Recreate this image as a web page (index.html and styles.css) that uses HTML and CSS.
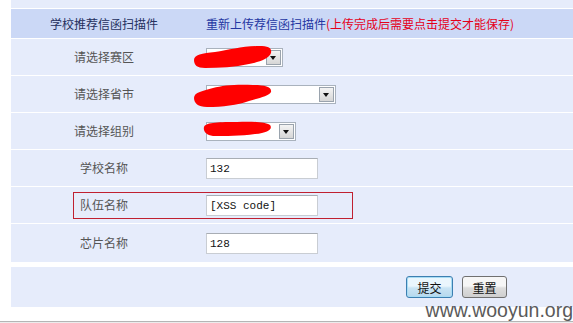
FILE: index.html
```html
<!DOCTYPE html>
<html lang="zh-CN">
  <head>
    <meta charset="UTF-8" />
    <title>学校推荐信函</title>
    <link rel="stylesheet" href="styles.css">
  </head>
  <body>
    <div class="page">
      <div class="form">
        <div class="stripe"></div>
        <div class="row head">
          <div class="label">学校推荐信函扫描件</div>
          <div class="value"><a class="upload" href="#">重新上传荐信函扫描件</a><span class="warn">(上传完成后需要点击提交才能保存)</span></div>
        </div>
        <div class="row">
          <div class="label">请选择赛区</div>
          <div class="value">
            <span class="select w1"><span class="arrow"></span></span>
            <svg class="blot b1" width="80" height="24" viewBox="0 0 80 24"><path d="M1 15 C1 10 9 8 22 7 C36 5 50 1 66 1 C76 1 79 3 78 8 C76 14 66 17 56 19 C42 22 26 23 12 23 C4 23 1 20 1 15 Z" fill="#f00"/></svg>
          </div>
        </div>
        <div class="row">
          <div class="label">请选择省市</div>
          <div class="value">
            <span class="select w2"><span class="arrow"></span></span>
            <svg class="blot b2" width="80" height="24" viewBox="0 0 80 24"><path d="M1 14 C1 8 10 7 20 4 C30 1 46 0 60 1 C72 1 79 3 78 8 C76 12 66 14 56 17 C44 21 30 23 14 23 C5 23 1 19 1 14 Z" fill="#f00"/></svg>
          </div>
        </div>
        <div class="row">
          <div class="label">请选择组别</div>
          <div class="value">
            <span class="select w3"><span class="arrow"></span></span>
            <svg class="blot b3" width="70" height="16" viewBox="0 0 70 16"><path d="M1 6 C3 1 18 1 34 1 C48 0 62 1 67 4 C70 8 65 12 52 13 C38 15 22 15 10 15 C3 14 0 10 1 6 Z" fill="#f00"/></svg>
          </div>
        </div>
        <div class="row">
          <div class="label">学校名称</div>
          <div class="value"><span class="input">132</span></div>
        </div>
        <div class="row">
          <div class="label">队伍名称</div>
          <div class="value"><span class="input">[XSS code]</span></div>
          <div class="mark"></div>
        </div>
        <div class="row last">
          <div class="label">芯片名称</div>
          <div class="value"><span class="input">128</span></div>
        </div>
        <div class="actions">
          <button class="btn primary">提交</button>
          <button class="btn">重置</button>
        </div>
      </div>
    </div>
    <div class="footer"></div>
    <div class="watermark">www.wooyun.org</div>
  </body>
</html>
```
FILE: styles.css
```css
* {
  margin: 0;
  padding: 0;
  box-sizing: border-box;
}
body {
  position: relative;
  background: #fff;
  font-family: "Noto Sans CJK SC", "Liberation Sans", sans-serif;
  font-size: 12px;
  color: #555;
  height: 323px;
  overflow: hidden;
}
.page {
  padding-left: 11px;
}
.form {
  display: flex;
  flex-direction: column;
  gap: 1px;
  background: #fff;
}
.stripe {
  height: 8px;
  background: #e6ecfb;
}
.row {
  position: relative;
  display: grid;
  grid-template-columns: 186px 1fr;
  align-items: center;
  height: 36px;
  background: #e6ecfb;
}
.row.head {
  height: 29px;
  background: #cbd8f6;
}
.row.last {
  height: 38px;
}
.label {
  text-align: center;
  line-height: 14px;
}
.head .label {
  color: #25305e;
}
.value {
  position: relative;
  padding-left: 9px;
  display: flex;
  align-items: center;
  line-height: 14px;
}
.upload {
  color: #2436a2;
  text-decoration: none;
}
.warn {
  color: #e4001a;
}
/* old style drop-down */
.select {
  position: relative;
  display: block;
  height: 19px;
  background: #fff;
  border: 1px solid #a9b2bd;
}
.select.w1 { width: 77px; }
.select.w2 { width: 130px; }
.select.w3 { width: 90px; }
.arrow {
  position: absolute;
  right: 1px;
  top: 1px;
  width: 15px;
  height: 15px;
  border: 1px solid #9aa3ad;
  background: linear-gradient(#f4f4f4, #d6d6d6);
}
.arrow::after {
  content: "";
  position: absolute;
  left: 3px;
  top: 5px;
  border-left: 3.5px solid transparent;
  border-right: 3.5px solid transparent;
  border-top: 4px solid #111;
}
.blot {
  position: absolute;
  display: block;
}
.b1 { left: -4px; top: -3px; }
.b2 { left: -4px; top: -1px; }
.b3 { left: 6px; top: -1px; }
.input {
  display: block;
  width: 112px;
  height: 21px;
  padding: 3px 3px 0;
  background: #fff;
  border: 1px solid #c9cdd3;
  border-top-color: #a8adb4;
  font-family: "Liberation Mono", monospace;
  font-size: 11px;
  line-height: 15px;
  color: #111;
}
/* annotation box */
.mark {
  position: absolute;
  left: 62px;
  top: 5px;
  width: 280px;
  height: 27px;
  border: 1px solid #c02030;
  pointer-events: none;
}
.actions {
  margin-top: 4px;
  height: 40px;
  display: flex;
  align-items: center;
  justify-content: flex-end;
  gap: 9px;
  padding-right: 66px;
  background: #e6ecfb;
}
.btn {
  width: 45px;
  height: 22px;
  font-family: inherit;
  font-size: 12px;
  color: #111;
  border: 1px solid #707070;
  border-radius: 3px;
  background: linear-gradient(#f6f6f6 45%, #dddddd 55%, #cfcfcf);
}
.btn.primary {
  width: 47px;
  border-color: #3c7fb1;
  box-shadow: inset 0 0 0 1px #a8dcf4;
  background: linear-gradient(#eaf6fd 45%, #c9e4f4 55%, #b6d8ee);
}
.footer {
  margin-top: 14px;
  height: 3px;
  border-top: 1px solid #b5b5b5;
  background: #ececec;
}
.watermark {
  position: absolute;
  right: 0;
  top: 299px;
  font-family: "Liberation Sans", Arial, sans-serif;
  font-size: 19.5px;
  line-height: 22px;
  color: #5a5a5a;
}
```
